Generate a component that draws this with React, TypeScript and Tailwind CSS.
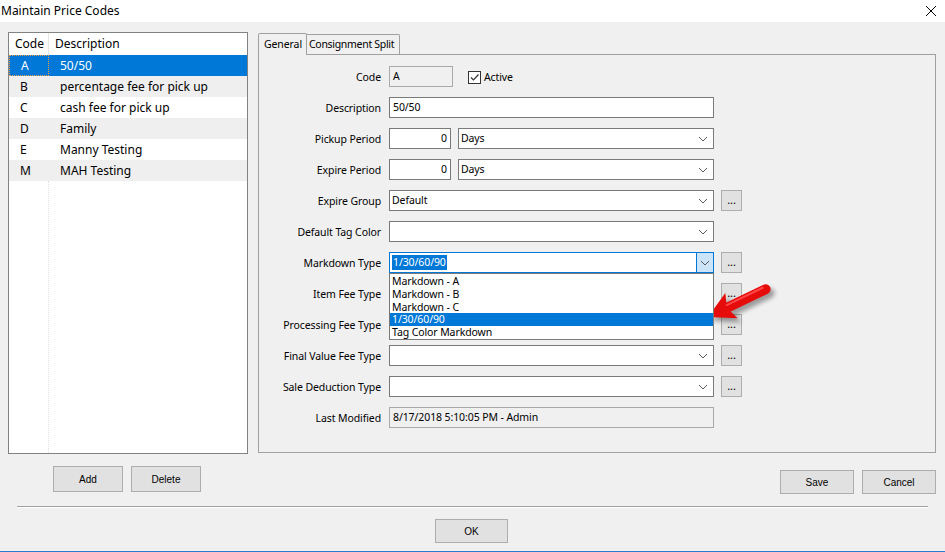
import React from "react";

const rows = [
  { code: "A", desc: "50/50" },
  { code: "B", desc: "percentage fee for pick up" },
  { code: "C", desc: "cash fee for pick up" },
  { code: "D", desc: "Family" },
  { code: "E", desc: "Manny Testing" },
  { code: "M", desc: "MAH Testing" },
];

const markdownOptions = ["Markdown - A", "Markdown - B", "Markdown - C", "1/30/60/90", "Tag Color Markdown"];

function Chevron() {
  return (
    <svg width="10" height="6" viewBox="0 0 10 6" className="shrink-0">
      <path d="M1 1 L5 5 L9 1" fill="none" stroke="#5a5a5a" strokeWidth="1" />
    </svg>
  );
}

function Ellipsis() {
  return (
    <div className="ml-[7px] w-[21px] h-[21px] border border-[#adadad] bg-[#e1e1e1] flex items-center justify-center text-[11px] leading-none pb-[3px]">
      ...
    </div>
  );
}

function Select({ value, width = "w-[325px]" }: { value?: string; width?: string }) {
  return (
    <div className={`${width} h-[21px] border border-[#7a7a7a] bg-white flex items-center justify-between pl-[2px] pr-[5px]`}>
      <span>{value}</span>
      <Chevron />
    </div>
  );
}

function Field({ label, children }: { label: string; children?: React.ReactNode }) {
  return (
    <div className="flex items-center h-[21px]">
      <div className="w-[122px] text-right text-black whitespace-nowrap pt-[2px]">{label}</div>
      <div className="ml-[8px] flex items-center">{children}</div>
    </div>
  );
}

function Button({ label, className }: { label: string; className: string }) {
  return (
    <div
      className={`${className} border border-[#adadad] bg-[#e1e1e1] flex items-center justify-center text-[10px] font-['Liberation_Sans_Narrow','Liberation_Sans',sans-serif]`}
    >
      {label}
    </div>
  );
}

export default function App() {
  return (
    <div className="relative w-[945px] h-[552px] bg-[#f0f0f0] flex flex-col font-['Noto_Sans',sans-serif] text-black overflow-hidden">
      {/* title bar */}
      <div className="h-[22px] bg-white flex items-center justify-between pl-[1px] pr-[8px]">
        <span className="text-[12px]">Maintain Price Codes</span>
        <svg width="12" height="12" viewBox="0 0 12 12">
          <path d="M1 1 L11 11 M11 1 L1 11" stroke="#000" strokeWidth="1" />
        </svg>
      </div>

      <div className="flex pl-[8px] pt-[10px] gap-[10px]">
        {/* code list */}
        <div className="w-[240px] h-[422px] border border-[#828282] bg-white flex flex-col">
          <div className="flex h-[22px] items-center text-[12px]">
            <div className="w-[40px] pl-[6px] border-r border-[#e5e5e5] h-full flex items-center">Code</div>
            <div className="pl-[6px]">Description</div>
          </div>
          {rows.map((r, i) => {
            const sel = i === 0;
            const bg = sel ? "bg-[#0078d7] text-white" : i % 2 === 1 ? "bg-[#efefef]" : "bg-white";
            return (
              <div key={r.code} className={`flex h-[21px] items-center text-[12px] ${bg}`}>
                <div
                  className={`w-[40px] h-full flex items-center pl-[11px] ${
                    sel ? "border border-dotted border-[#f0a040]" : ""
                  }`}
                >
                  {r.code}
                </div>
                <div className="pl-[11px]">{r.desc}</div>
              </div>
            );
          })}
          <div className="flex-1 flex">
            <div className="w-[40px] border-r border-dotted border-[#e0e0e0]" />
          </div>
        </div>

        {/* tabs */}
        <div className="w-[678px] flex flex-col text-[10.5px] tracking-[-0.1px]">
          <div className="flex items-end h-[22px]">
            <div className="w-[49px] h-[22px] border border-b-0 border-[#a0a0a0] bg-[#f0f0f0] pl-[5px] pt-[3px] rounded-t-[2px] relative top-[1px] whitespace-nowrap">
              General
            </div>
            <div className="w-[93px] h-[20px] border border-b-0 border-l-0 border-[#a0a0a0] bg-[#f0f0f0] pl-[2px] pt-[2px] rounded-tr-[2px] whitespace-nowrap tracking-[-0.3px]">
              Consignment Split
            </div>
          </div>
          <div className="h-[399px] border border-[#a0a0a0] flex flex-col gap-[10px] pt-[11px]">
            <Field label="Code">
              <div className="w-[64px] h-[21px] border border-[#a9a9a9] bg-[#f0f0f0] pl-[3px] flex items-center">A</div>
              <div className="ml-[15px] mt-[2px] w-[13px] h-[13px] border border-[#333] bg-white flex items-center justify-center">
                <svg width="11" height="11" viewBox="0 0 11 11">
                  <path d="M2 5.5 L4.5 8 L9.5 2.5" fill="none" stroke="#333" strokeWidth="1.2" />
                </svg>
              </div>
              <span className="ml-[3px] mt-[2px]">Active</span>
            </Field>
            <Field label="Description">
              <div className="w-[325px] h-[21px] border border-[#7a7a7a] bg-white pl-[3px] flex items-center">50/50</div>
            </Field>
            <Field label="Pickup Period">
              <div className="w-[62px] h-[21px] border border-[#7a7a7a] bg-white pr-[3px] flex items-center justify-end">0</div>
              <div className="ml-[7px]">
                <Select value="Days" width="w-[256px]" />
              </div>
            </Field>
            <Field label="Expire Period">
              <div className="w-[62px] h-[21px] border border-[#7a7a7a] bg-white pr-[3px] flex items-center justify-end">0</div>
              <div className="ml-[7px]">
                <Select value="Days" width="w-[256px]" />
              </div>
            </Field>
            <Field label="Expire Group">
              <Select value="Default" />
              <Ellipsis />
            </Field>
            <Field label="Default Tag Color">
              <Select />
            </Field>
            <Field label="Markdown Type">
              <div className="relative w-[325px] h-[21px] border border-[#0078d7] bg-white flex items-center">
                <span className="ml-[2px] bg-[#0078d7] text-white px-[1px] leading-[15px]">1/30/60/90</span>
                <div className="ml-auto w-[17px] h-full bg-[#cce4f7] border-l border-[#0078d7] flex items-center justify-center">
                  <Chevron />
                </div>
                <div className="absolute left-[-1px] top-[20px] w-[325px] h-[67px] border border-[#7a7a7a] bg-white flex flex-col pt-[1px] z-10">
                  {markdownOptions.map((o) => (
                    <div
                      key={o}
                      className={`h-[13px] leading-[12px] pl-[2px] overflow-hidden ${o === "1/30/60/90" ? "bg-[#0078d7] text-white" : ""}`}
                    >
                      {o}
                    </div>
                  ))}
                </div>
              </div>
              <Ellipsis />
            </Field>
            <Field label="Item Fee Type">
              <Select />
              <Ellipsis />
            </Field>
            <Field label="Processing Fee Type">
              <Select />
              <Ellipsis />
            </Field>
            <Field label="Final Value Fee Type">
              <Select />
              <Ellipsis />
            </Field>
            <Field label="Sale Deduction Type">
              <Select />
              <Ellipsis />
            </Field>
            <Field label="Last Modified">
              <div className="w-[325px] h-[21px] border border-[#a9a9a9] bg-[#f0f0f0] pl-[3px] flex items-center">
                8/17/2018 5:10:05 PM - Admin
              </div>
            </Field>
          </div>
        </div>
      </div>

      {/* bottom buttons */}
      <div className="flex items-start mt-[12px] h-[27px]">
        <Button label="Add" className="ml-[53px] w-[70px] h-[26px]" />
        <Button label="Delete" className="ml-[8px] w-[70px] h-[26px]" />
        <Button label="Save" className="ml-auto mt-[4px] w-[74px] h-[24px]" />
        <Button label="Cancel" className="ml-[8px] mr-[9px] mt-[4px] w-[74px] h-[24px]" />
      </div>

      <div className="mt-[13px] mx-[17px] h-[2px] border-t border-[#a0a0a0] border-b border-b-white" />

      <div className="flex justify-center mt-[11px]">
        <Button label="OK" className="w-[73px] h-[24px] ml-[-2px]" />
      </div>

      <div className="absolute left-0 right-0 bottom-0 h-[1px] bg-[#2b79d0]" />

      {/* annotation arrow */}
      <svg className="absolute left-0 top-0 pointer-events-none" width="945" height="552">
        <defs>
          <filter id="sh" x="-50%" y="-50%" width="200%" height="200%">
            <feGaussianBlur stdDeviation="2" />
          </filter>
        </defs>
        <g transform="translate(712,321) rotate(-25.8)" opacity="0.35" filter="url(#sh)">
          <line x1="16" y1="0" x2="64" y2="0" stroke="#000" strokeWidth="10" strokeLinecap="round" />
          <polygon points="0,0 26,-14 21,0 26,14" fill="#000" />
        </g>
        <g transform="translate(708,317) rotate(-25.8)">
          <line x1="16" y1="0" x2="64" y2="0" stroke="#e60c0c" strokeWidth="10" strokeLinecap="round" />
          <polygon points="0,0 26,-14 21,0 26,14" fill="#e60c0c" />
          <line x1="22" y1="-2.5" x2="62" y2="-2.5" stroke="#ff4545" strokeWidth="2" strokeLinecap="round" />
        </g>
      </svg>
    </div>
  );
}
